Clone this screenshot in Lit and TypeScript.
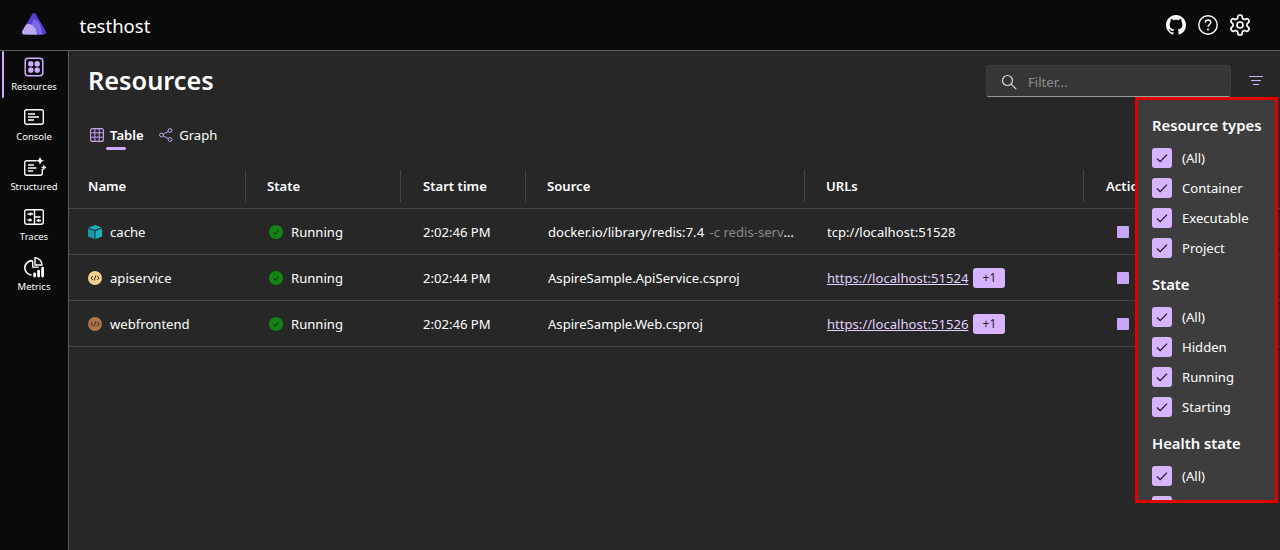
import { LitElement, html, css, svg } from "lit";
import { customElement } from "lit/decorators.js";

const gear = svg`<path fill="none" stroke="currentColor" stroke-width="1.7" d="M12.22 2h-.44a2 2 0 0 0-2 2v.18a2 2 0 0 1-1 1.73l-.43.25a2 2 0 0 1-2 0l-.15-.08a2 2 0 0 0-2.73.73l-.22.38a2 2 0 0 0 .73 2.73l.15.1a2 2 0 0 1 1 1.72v.51a2 2 0 0 1-1 1.74l-.15.09a2 2 0 0 0-.73 2.73l.22.38a2 2 0 0 0 2.73.73l.15-.08a2 2 0 0 1 2 0l.43.25a2 2 0 0 1 1 1.73V20a2 2 0 0 0 2 2h.44a2 2 0 0 0 2-2v-.18a2 2 0 0 1 1-1.73l.43-.25a2 2 0 0 1 2 0l.15.08a2 2 0 0 0 2.73-.73l.22-.39a2 2 0 0 0-.73-2.73l-.15-.08a2 2 0 0 1-1-1.74v-.5a2 2 0 0 1 1-1.74l.15-.09a2 2 0 0 0 .73-2.73l-.22-.38a2 2 0 0 0-2.73-.73l-.15.08a2 2 0 0 1-2 0l-.43-.25a2 2 0 0 1-1-1.73V4a2 2 0 0 0-2-2z"/><circle cx="12" cy="12" r="3" fill="none" stroke="currentColor" stroke-width="1.7"/>`;

const github = svg`<path fill="currentColor" d="M8 0C3.58 0 0 3.58 0 8c0 3.54 2.29 6.53 5.47 7.59.4.07.55-.17.55-.38 0-.19-.01-.82-.01-1.49-2.01.37-2.53-.49-2.69-.94-.09-.23-.48-.94-.82-1.13-.28-.15-.68-.52-.01-.53.63-.01 1.08.58 1.23.82.72 1.21 1.87.87 2.33.66.07-.52.28-.87.51-1.07-1.78-.2-3.64-.89-3.64-3.95 0-.87.31-1.59.82-2.15-.08-.2-.36-1.02.08-2.12 0 0 .67-.21 2.2.82.64-.18 1.32-.27 2-.27.68 0 1.36.09 2 .27 1.53-1.04 2.2-.82 2.2-.82.44 1.1.16 1.92.08 2.12.51.56.82 1.27.82 2.15 0 3.07-1.87 3.75-3.65 3.95.29.25.54.73.54 1.48 0 1.07-.01 1.93-.01 2.2 0 .21.15.46.55.38A8.013 8.013 0 0016 8c0-4.42-3.58-8-8-8z"/>`;

const navIcons: Record<string, unknown> = {
  Resources: svg`<rect x="1.2" y="1.200" width="17.600" height="17.600" rx="3" fill="none" stroke="#d0adff" stroke-width="1.500"/><g fill="#d0adff"><rect x="4.200" y="4.200" width="5.200" height="5.200" rx="1.700"/><rect x="10.600" y="4.200" width="5.200" height="5.200" rx="1.700"/><rect x="4.200" y="10.600" width="5.200" height="5.200" rx="1.700"/><rect x="10.600" y="10.600" width="5.200" height="5.200" rx="1.700"/></g>`,
  Console: svg`<rect x=".7" y="2.700" width="18.600" height="14.600" rx="2" fill="none" stroke="#fff" stroke-width="1.400"/><path d="M4 7h7M4 10h11M4 13h6" stroke="#fff" stroke-width="1.500" fill="none"/>`,
  Structured: svg`<path d="M12.500 3.700H2.700a2 2 0 0 0-2 2V16.300a2 2 0 0 0 2 2h13.600a2 2 0 0 0 2-2V12" fill="none" stroke="#fff" stroke-width="1.400"/><path d="M4 8h6M4 11h8.500M4 14h5" stroke="#fff" stroke-width="1.500" fill="none"/><path fill="#fff" d="M16 -.5c.5 2.800 1.500 3.800 4.300 4.300-2.800.5-3.800 1.500-4.300 4.300-.5-2.800-1.500-3.800-4.300-4.300 2.800-.5 3.800-1.500 4.300-4.300z"/><path d="M19.800 8.300v4.400M17.600 10.500h4.400" stroke="#fff" stroke-width="1.300"/>`,
  Traces: svg`<rect x=".7" y="2.700" width="18.600" height="14.600" rx="2" fill="none" stroke="#fff" stroke-width="1.400"/><path d="M3.500 7h5.500M6.500 5.500v3M10.500 3v14M10.500 10h6M12.500 13.500h4.500M14.500 12v3M3.500 13h4.500M6 11.500v3" stroke="#fff" stroke-width="1.400" fill="none"/>`,
  Metrics: svg`<path d="M8.500 3.600A7.300 7.300 0 0 0 .8 10.800a7.300 7.300 0 0 0 6.800 7.200" fill="none" stroke="#fff" stroke-width="1.600"/><path d="M11 .8a7.200 7.200 0 0 1 7 7.200h-7z" fill="none" stroke="#fff" stroke-width="1.400"/><path d="M8.700 3.800v6.400h6" fill="none" stroke="#fff" stroke-width="1.300"/><rect x="9.200" y="15.500" width="2.800" height="5" rx="1.400" fill="#fff"/><rect x="13.200" y="12.800" width="2.800" height="7.700" rx="1.400" fill="#fff"/><rect x="17.200" y="9.800" width="2.800" height="10.700" rx="1.400" fill="#fff"/>`,
};

const cols = ["Name", "State", "Start time", "Source", "URLs", "Actions"];
const rows = [
  { name: "cache", kind: "box", time: "2:02:46 PM", source: "docker.io/library/redis:7.4", args: "-c redis-server --requirepass", url: "tcp://localhost:51528", link: false },
  { name: "apiservice", kind: "api", time: "2:02:44 PM", source: "AspireSample.ApiService.csproj", args: "", url: "https://localhost:51524", link: true },
  { name: "webfrontend", kind: "web", time: "2:02:46 PM", source: "AspireSample.Web.csproj", args: "", url: "https://localhost:51526", link: true },
];
const groups = [
  { title: "Resource types", items: ["(All)", "Container", "Executable", "Project"] },
  { title: "State", items: ["(All)", "Hidden", "Running", "Starting"] },
  { title: "Health state", items: ["(All)", "Healthy"] },
];

@customElement("app-root")
export class AppRoot extends LitElement {
  static styles = css`
    :host {
      display: grid;
      grid-template-rows: 50px 1fr;
      grid-template-columns: 68px 1fr;
      height: 100vh;
      width: 100%;
      position: relative;
      overflow: hidden;
      background: #0a0a0a;
      color: #fff;
      font-family: "Noto Sans", "Open Sans", sans-serif;
      font-size: 13.100px;
    }
    svg { display: block; flex: none; }
    .top {
      grid-column: 1 / 3;
      display: flex;
      align-items: center;
      background: #0a0a0a;
      border-bottom: 1px solid #5c5c5c;
      box-sizing: content-box;
      height: 50px;
    }
    .logo { margin: 0 0 2px 22px; }
    .app { margin-left: 33.500px; font-size: 18.500px; }
    .top-icons { margin-left: auto; margin-right: 28px; display: flex; align-items: center; gap: 10px; color: #fff; }
    .gh { margin-right: 1px; }
    .cog { margin-left: -1px; }
    .nav { padding-top: 1px; display: flex; flex-direction: column; }
    .nav-item {
      height: 50px;
      position: relative;
      display: flex;
      flex-direction: column;
      align-items: center;
      padding-top: 6px;
      box-sizing: border-box;
      font-size: 9.500px;
      gap: 3px;
      line-height: 13px;
    }
    .nav-item.active::before {
      content: "";
      position: absolute;
      left: 2px; top: 0;
      width: 2px; height: 47px;
      background: #d0adff;
      border-radius: 1px;
    }
    .main {
      background: #272727;
      border-left: 1px solid #5c5c5c;
      margin-top: 1px;
      display: flex;
      flex-direction: column;
      min-width: 0;
    }
    .head { display: flex; align-items: flex-start; padding: 14px 0 0 19px; height: 55px; box-sizing: border-box; }
    h1 { margin: -2px 0 0; font-size: 25.300px; font-weight: 600; line-height: 34px; }
    .filter {
      margin-left: auto;
      width: 245px; height: 32px;
      box-sizing: border-box;
      background: #363636;
      border-radius: 4px 4px 3px 3px;
      border: 1px solid #3e3e3e;
      border-bottom: 1px solid #9a9a9a;
      display: flex; align-items: center;
      padding: 2px 0 0 14px; gap: 11px;
      color: #8f8f8f;
    }
    .filter-btn { margin: 11px 17px 0 18px; }
    .tabs { display: flex; padding-left: 21px; height: 64px; box-sizing: border-box; padding-top: 14px; }
    .tab { display: flex; align-items: center; gap: 6px; height: 30px; position: relative; margin-right: 15.500px; }
    .tab.on { font-weight: 600; }
    .tab.on::after {
      content: ""; position: absolute; left: 16px; width: 20px; bottom: 0; height: 3px;
      background: #d0adff; border-radius: 2px;
    }
    .grid { display: grid; grid-template-columns: 177px 155px 125px 279px 279px 1fr; }
    .ths { border-bottom: 1px solid #444; height: 39px; box-sizing: border-box; }
    .th { height: 32px; display: flex; align-items: center; font-weight: 600; padding-left: 21px; border-right: 1px solid #444; box-sizing: border-box; white-space: nowrap; overflow: hidden; }
    .th:first-child { padding-left: 19px; }
    .th:nth-child(3), .th:last-child { padding-left: 22px; }
    .th:last-child { border-right: none; }
    .row { height: 46px; border-bottom: 1px solid #444; box-sizing: border-box; align-items: center; }
    .td { display: flex; align-items: center; min-width: 0; white-space: nowrap; }
    .td.n { padding-left: 19px; gap: 8px; }
    .td.s { padding-left: 23px; gap: 8px; }
    .td.t { padding-left: 22px; }
    .td.src { padding: 0 5px 0 22px; }
    .clip { overflow: hidden; text-overflow: ellipsis; white-space: nowrap; }
    .args { color: #8a8a8a; margin-left: 2px; }
    .td.u { padding-left: 22px; gap: 5px; }
    .link { color: #e3d2ff; text-decoration: underline; }
    .badge {
      background: #d6b4ff; color: #3a1a1a; border-radius: 3px;
      width: 32px; height: 20px; display: flex; align-items: center; justify-content: center;
      font-size: 12px;
    }
    .td.a { padding-left: 33px; }
    .stop { width: 12px; height: 12px; background: #c9a5f5; border-radius: 1px; }
    .pop {
      position: absolute;
      left: 1135px; top: 97px;
      width: 143px; height: 406px;
      box-sizing: border-box;
      border: 3px solid #e00000;
      background: #3d3d3d;
      overflow: hidden;
      padding: 14px 0 0 14px;
    }
    .pop h3 { margin: 0 0 5px; font-size: 14.800px; font-weight: 600; line-height: 22px; white-space: nowrap; height: 24px; }
    .group { margin-bottom: 10px; }
    .check { display: flex; align-items: center; height: 30px; gap: 10px; white-space: nowrap; }
    .box { width: 20px; height: 20px; background: #d6b4ff; border-radius: 3px; display: flex; align-items: center; justify-content: center; }
  `;

  private kindIcon(kind: string) {
    if (kind === "box") {
      return html`<svg width="14" height="14" viewBox="0 0 14 14"><path fill="#1fb6c4" d="M7 0 13.500 2.500 7 5 .5 2.500z"/><path fill="#169aa8" d="M0 3.500 6.500 6v8L0 11.500z"/><path fill="#1ab0be" d="M14 3.500 7.500 6v8l6.500-2.500z"/><path fill="#0f6f7a" d="m3.500 1.200 6.500 2.500.8-.3L4.300.9z"/></svg>`;
    }
    const fill = kind === "api" ? "#f5d08e" : "#a9754a";
    return html`<svg width="14" height="14" viewBox="0 0 14 14"><circle cx="7" cy="7" r="7" fill=${fill}/><path d="M4.800 5 2.900 7l1.900 2M9.200 5l1.900 2-1.900 2M7.900 4.500 6.100 9.500" fill="none" stroke="#3d2a14" stroke-width="1"/></svg>`;
  }

  render() {
    return html`
      <div class="top">
        <svg class="logo" width="24" height="22" viewBox="0 0 24 22">
          <path fill="#5a3cd6" d="M12 0c.7 0 1.300.4 1.700 1L23.600 18c.8 1.400-.1 3.500-1.700 3.500H2C.4 21.500-.5 19.400.3 18L10.300 1c.4-.6 1-1 1.700-1z"/>
          <path fill="#7d68e6" d="M11.500 6.500c3.800 0 6.300 3 7 6.500.5 2.800 1.300 7 2.500 8.500H6z"/>
          <path fill="#bcaaf0" d="M6.500 11c3.400 0 6 2.600 7 5.500.6 1.800 1 3.800 1.800 5H2C.4 21.500-.5 19.400.3 18l3.300-5.700C4.200 11.300 5.200 11 6.500 11z"/>
        </svg>
        <span class="app">testhost</span>
        <div class="top-icons">
          <svg class="gh" width="20" height="20" viewBox="0 0 16 16">${github}</svg>
          <svg width="22" height="22" viewBox="0 0 22 22"><circle cx="11" cy="11" r="9.200" fill="none" stroke="currentColor" stroke-width="1.400"/><path d="M8.300 8.700c0-1.700 1.200-2.700 2.800-2.700s2.700 1 2.700 2.400c0 2.100-2.700 2.200-2.700 4.400" fill="none" stroke="currentColor" stroke-width="1.400"/><circle cx="11" cy="15.500" r="1" fill="currentColor"/></svg>
          <svg class="cog" width="24" height="24" viewBox="0 0 24 24">${gear}</svg>
        </div>
      </div>
      <nav class="nav">
        ${["Resources", "Console", "Structured", "Traces", "Metrics"].map(
          (n, i) => html`<div class="nav-item ${i === 0 ? "active" : ""}">
            <svg width="20" height="20" viewBox="0 0 20 20" overflow="visible">${navIcons[n]}</svg>
            <span>${n}</span>
          </div>`
        )}
      </nav>
      <main class="main">
        <div class="head">
          <h1>Resources</h1>
          <div class="filter">
            <svg width="16" height="16" viewBox="0 0 16 16"><circle cx="6.500" cy="6.500" r="5" fill="none" stroke="#d8d8d8" stroke-width="1.200"/><path d="m10.200 10.200 5 5" stroke="#d8d8d8" stroke-width="1.200"/></svg>
            <span>Filter...</span>
          </div>
          <svg class="filter-btn" width="14" height="12" viewBox="0 0 14 12"><path d="M0 .5h14M2 4.500h10M4 8.500h6" stroke="#d6b4ff" stroke-width="1"/></svg>
        </div>
        <div class="tabs">
          <div class="tab on">
            <svg width="14" height="14" viewBox="0 0 14 14"><rect x=".6" y=".6" width="12.800" height="12.800" rx="2" fill="none" stroke="#c9a5f5" stroke-width="1.100"/><path d="M4.800 1v12M9.200 1v12M1 4.800h12M1 9.200h12" stroke="#c9a5f5" stroke-width="1"/></svg>
            <span>Table</span>
          </div>
          <div class="tab">
            <svg width="14" height="14" viewBox="0 0 14 14"><g fill="none" stroke="#c9a5f5" stroke-width="1"><circle cx="2.500" cy="7" r="1.900"/><circle cx="11" cy="2.500" r="1.900"/><circle cx="11" cy="11.500" r="1.900"/><path d="m4.200 6.100 5.100-2.700M4.200 7.900l5.100 2.700"/></g></svg>
            <span>Graph</span>
          </div>
        </div>
        <div class="grid ths">${cols.map((c) => html`<div class="th">${c}</div>`)}</div>
        ${rows.map(
          (r) => html`<div class="grid row">
            <div class="td n">${this.kindIcon(r.kind)}<span>${r.name}</span></div>
            <div class="td s">
              <svg width="14" height="14" viewBox="0 0 14 14"><circle cx="7" cy="7" r="7" fill="#118511"/><path d="m4.300 7.200 2 2 3.500-3.800" fill="none" stroke="#1f331f" stroke-width="1.100"/></svg>
              <span>Running</span>
            </div>
            <div class="td t">${r.time}</div>
            <div class="td src"><div class="clip">${r.source}${r.args ? html` <span class="args">${r.args}</span>` : ""}</div></div>
            <div class="td u">
              ${r.link ? html`<span class="link">${r.url}</span><span class="badge">+1</span>` : html`<span>${r.url}</span>`}
            </div>
            <div class="td a"><div class="stop"></div></div>
          </div>`
        )}
      </main>
      <aside class="pop">
        ${groups.map(
          (g) => html`<div class="group">
            <h3>${g.title}</h3>
            ${g.items.map(
              (it) => html`<div class="check">
                <span class="box"><svg width="14" height="14" viewBox="0 0 14 14"><path d="m2 7.500 3.200 3.200L12 3.600" fill="none" stroke="#1c1424" stroke-width="1.200"/></svg></span>
                <span>${it}</span>
              </div>`
            )}
          </div>`
        )}
      </aside>
    `;
  }
}
